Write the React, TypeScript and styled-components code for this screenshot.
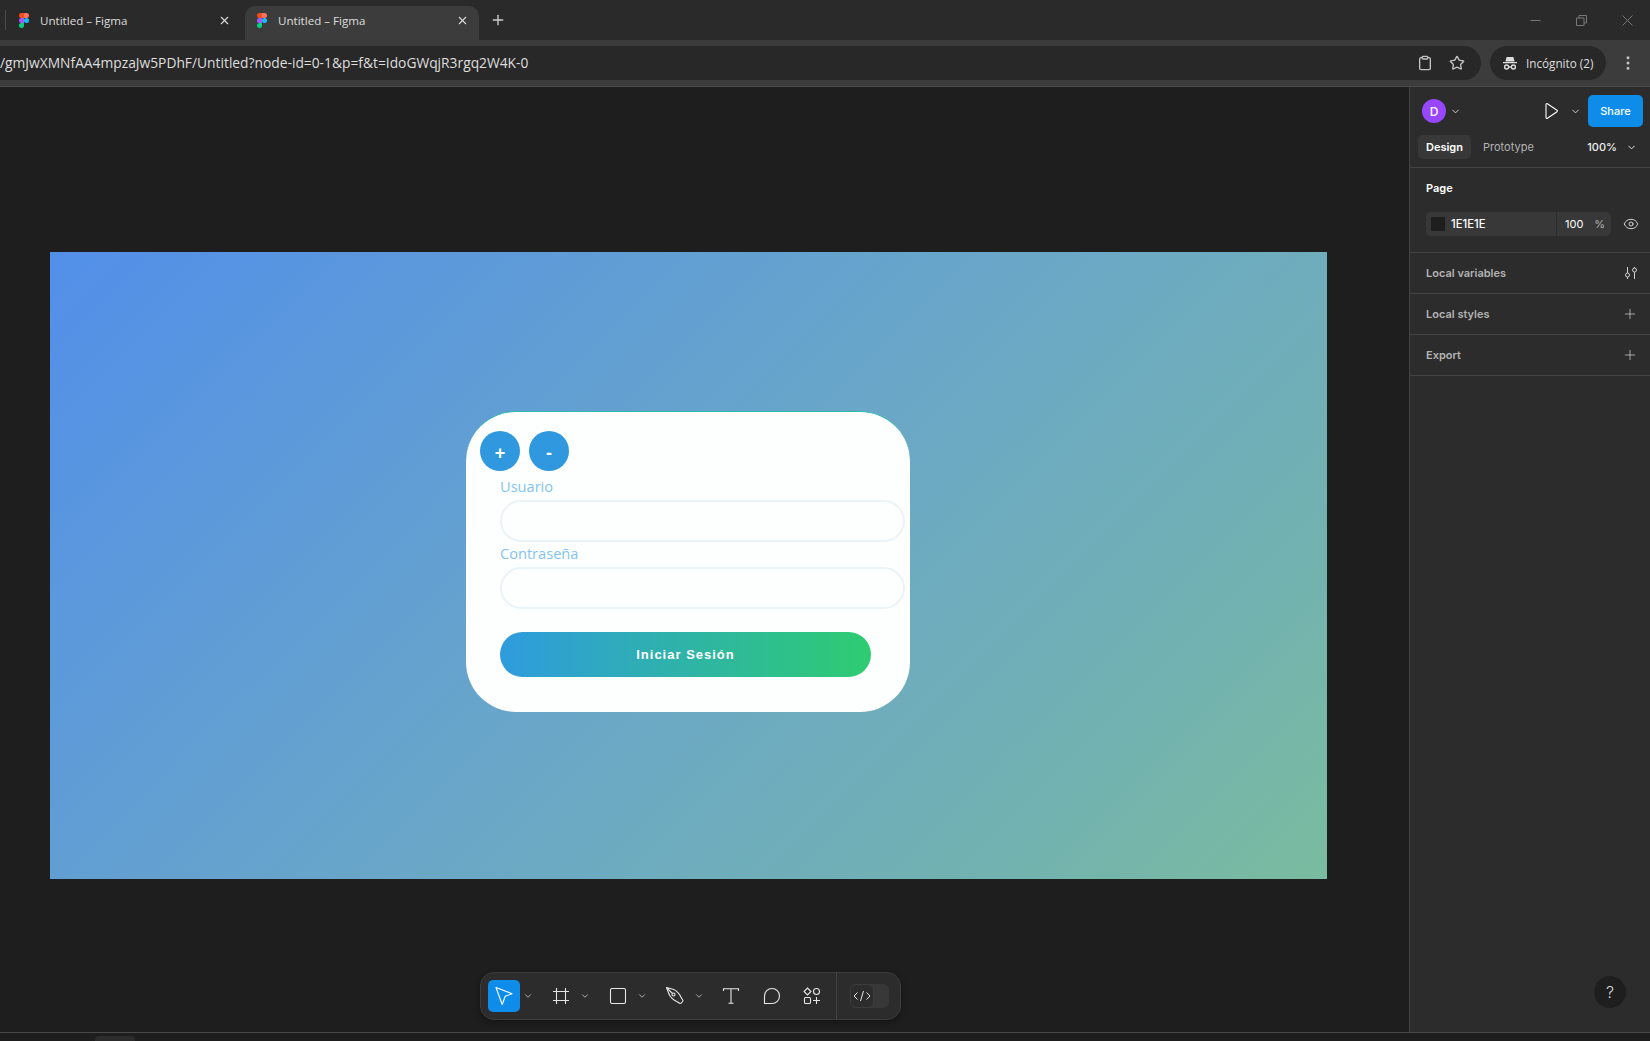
import React from 'react'
import styled, { createGlobalStyle } from 'styled-components'
import { ChevronDown, Clipboard, Eye, EllipsisVertical, Plus, Star, X } from 'lucide-react'

const GlobalStyle = createGlobalStyle`
  html, body { margin: 0; padding: 0; background: #1e1e1e; }
  body { width: 1650px; height: 1041px; overflow: hidden; font-family: Inter, sans-serif; }
  * { box-sizing: border-box; }
`

const Page = styled.div`
  width: 1650px;
  height: 1041px;
  display: flex;
  flex-direction: column;
  overflow: hidden;
`

/* browser chrome */
const TabStrip = styled.div`
  height: 40px;
  display: flex;
  align-items: flex-end;
  padding-left: 5px;
  background: #2a2a2a;
  color: #dcdcdc;
  font-family: 'Open Sans', sans-serif;
  flex-shrink: 0;
`

const TabDivider = styled.div`
  width: 1px;
  height: 20px;
  background: #4a4a4a;
  margin: 0 0 10px 0;
`

const Tab = styled.div<{ $active?: boolean }>`
  width: ${p => (p.$active ? 234 : 233)}px;
  height: 34px;
  margin-left: ${p => (p.$active ? 5 : 1)}px;
  padding: 0 ${p => (p.$active ? 10 : 9)}px 6px 12px;
  display: flex;
  align-items: center;
  gap: 11px;
  border-radius: 10px 10px 0 0;
  background: ${p => (p.$active ? '#3c3c3c' : 'transparent')};
  font-size: 11.6px;
`

const TabTitle = styled.span`
  flex: 1;
  white-space: nowrap;
`

const NewTab = styled.div`
  width: 20px;
  height: 34px;
  margin-left: 9px;
  padding-bottom: 6px;
  display: flex;
  align-items: center;
  justify-content: center;
  color: #d0d0d0;
`

const WindowButtons = styled.div`
  margin-left: auto;
  height: 40px;
  display: flex;
  align-items: center;
  gap: 35px;
  padding-right: 17px;
  color: #777;
`

const Toolbar = styled.div`
  height: 46px;
  padding: 6px 0;
  display: flex;
  align-items: stretch;
  background: #3c3c3c;
  flex-shrink: 0;
`

const Omnibox = styled.div`
  width: 1481px;
  display: flex;
  align-items: center;
  padding-right: 16px;
  background: #282828;
  border-radius: 0 17px 17px 0;
  color: #dedede;
  font-family: 'Open Sans', sans-serif;
  font-size: 13.8px;
  gap: 16px;
`

const Url = styled.div`
  flex: 1;
  white-space: nowrap;
  padding-bottom: 1px;
`

const ProfilePill = styled.div`
  width: 116px;
  margin-left: 9px;
  display: flex;
  align-items: center;
  gap: 8px;
  padding-left: 12px;
  border-radius: 17px;
  background: #282828;
  color: #dedede;
  font-family: 'Open Sans', sans-serif;
  font-size: 11.7px;
  white-space: nowrap;
`

const MenuDots = styled.div`
  width: 44px;
  display: flex;
  align-items: center;
  justify-content: center;
  color: #c4c4c4;
`

/* figma workspace */
const Workspace = styled.div`
  flex: 1;
  min-height: 0;
  display: flex;
  border-top: 1px solid #4a4a4a;
`

const Canvas = styled.div`
  flex: 1;
  padding: 165px 0 0 50px;
  display: flex;
  flex-direction: column;
  align-items: flex-start;
  background: #1e1e1e;
`

const Frame = styled.div`
  width: 1277px;
  height: 627px;
  padding: 159px 0 0 416px;
  background: linear-gradient(135deg, #528fe9 0%, #6ba8c6 54%, #72b2b0 82%, #7abc9f 100%);
`

const LoginCard = styled.div`
  width: 444px;
  height: 301px;
  padding: 19px 5px 0 14px;
  background: #fdfffe;
  border-top: 1px solid #2fb8ac;
  border-radius: 50px;
`

const ZoomButtons = styled.div`
  display: flex;
  gap: 9px;
`

const ZoomButton = styled.button`
  width: 40px;
  height: 40px;
  padding: 5px 0 0;
  border: 0;
  border-radius: 50%;
  background: #3098de;
  color: #fff;
  font-family: 'Liberation Sans', sans-serif;
  font-size: 18px;
  font-weight: 700;
`

const Form = styled.div`
  padding: 4px 0 0 20px;
`

const FieldLabel = styled.label`
  display: block;
  height: 23px;
  margin-bottom: 2px;
  color: #84c4f2;
  font-family: 'Open Sans', sans-serif;
  font-size: 14.6px;
  line-height: 23px;
`

const FieldInput = styled.input`
  display: block;
  width: 405px;
  height: 42px;
  border: 2px solid #ebf3f7;
  border-radius: 21px;
  background: #fdfffe;
  outline: 0;
`

const SubmitButton = styled.button`
  display: block;
  width: 371px;
  height: 45px;
  margin-top: 23px;
  border: 0;
  border-radius: 23px;
  background: linear-gradient(90deg, #2f9bde, #2ecc71);
  color: #fff;
  font-family: 'Liberation Sans', sans-serif;
  font-size: 13px;
  font-weight: 700;
  letter-spacing: 1px;
`

const ToolDock = styled.div`
  width: 421px;
  height: 48px;
  margin: 93px 0 0 430px;
  padding-left: 7px;
  display: flex;
  align-items: center;
  background: #2c2c2c;
  border: 1px solid #3d3d3d;
  border-radius: 14px;
  box-shadow: 0 2px 6px rgba(0, 0, 0, 0.35);
  color: #e6e6e6;
`

const ToolGroup = styled.div<{ $gap?: number }>`
  display: flex;
  align-items: center;
  margin-right: ${p => p.$gap ?? 9}px;
`

const Tool = styled.div<{ $selected?: boolean }>`
  width: 32px;
  height: 32px;
  display: flex;
  align-items: center;
  justify-content: center;
  border-radius: 5px;
  background: ${p => (p.$selected ? '#0d8ce9' : 'transparent')};
`

const Caret = styled.div`
  width: 16px;
  display: flex;
  justify-content: center;
  color: #c8c8c8;
`

const DockDivider = styled.div`
  width: 1px;
  height: 46px;
  background: #444;
`

const DevToggle = styled.div`
  width: 39px;
  height: 24px;
  margin-left: 13px;
  background: #383838;
  border-radius: 6px;
`

const DevKnob = styled.div`
  width: 24px;
  height: 24px;
  display: flex;
  align-items: center;
  justify-content: center;
  background: #2c2c2c;
  border: 1px solid #3d3d3d;
  border-radius: 6px;
`

/* right panel */
const Panel = styled.aside`
  width: 241px;
  display: flex;
  flex-direction: column;
  background: #2c2c2c;
  border-left: 1px solid #444;
  color: #fff;
  font-size: 11px;
  position: relative;
`

const PanelHead = styled.div`
  height: 48px;
  padding: 8px 7px 0 12px;
  display: flex;
  align-items: flex-start;
`

const Avatar = styled.div`
  width: 24px;
  height: 24px;
  margin-top: 4px;
  border-radius: 50%;
  display: flex;
  align-items: center;
  justify-content: center;
  background: #9747ff;
  font-size: 12px;
  font-weight: 500;
`

const HeadCaret = styled.div<{ $left: number }>`
  margin: 11px 0 0 ${p => p.$left}px;
  display: flex;
  color: #ddd;
`

const PlayIcon = styled.div`
  margin: 7px 0 0 auto;
  display: flex;
`

const ShareButton = styled.div`
  width: 55px;
  height: 32px;
  margin-left: 7px;
  display: flex;
  align-items: center;
  justify-content: center;
  border-radius: 5px;
  background: #0d8ce9;
  font-weight: 500;
`

const TabRow = styled.div`
  height: 33px;
  padding: 0 13px 0 8px;
  display: flex;
  align-items: flex-start;
  border-bottom: 1px solid #444;
`

const ModeTab = styled.div<{ $active?: boolean }>`
  height: 24px;
  padding: 0 8px;
  display: flex;
  align-items: center;
  border-radius: 5px;
  background: ${p => (p.$active ? '#383838' : 'transparent')};
  color: ${p => (p.$active ? '#fff' : '#b3b3b3')};
  font-weight: ${p => (p.$active ? 600 : 400)};
  margin-right: 4px;
`

const ZoomValue = styled.div`
  margin-left: auto;
  height: 24px;
  display: flex;
  align-items: center;
  gap: 9px;
  font-weight: 500;
  color: #f0f0f0;
`

const PageSection = styled.section`
  height: 85px;
  padding: 12px 0 0 16px;
  border-bottom: 1px solid #444;
`

const SectionTitle = styled.div`
  height: 17px;
  line-height: 17px;
  font-weight: 600;
`

const ColorRow = styled.div`
  margin-top: 15px;
  display: flex;
  align-items: center;
`

const ColorField = styled.div`
  width: 185px;
  height: 24px;
  flex-shrink: 0;
  display: flex;
  align-items: center;
  padding-left: 5px;
  border-radius: 5px;
  background: #383838;
`

const Swatch = styled.div`
  width: 14px;
  height: 14px;
  margin-right: 6px;
  border-radius: 1px;
  background: #1e1e1e;
`

const HexValue = styled.div`
  width: 105px;
  font-size: 11.3px;
  font-weight: 500;
`

const Opacity = styled.div`
  height: 24px;
  flex: 1;
  display: flex;
  align-items: center;
  justify-content: space-between;
  padding: 0 6px 0 8px;
  border-left: 1px solid #2c2c2c;

  span { color: #b3b3b3; }
`

const EyeSlot = styled.div`
  margin-left: 12px;
  display: flex;
  color: #e6e6e6;
`

const CollapsedRow = styled.div`
  height: 41px;
  padding: 0 12px 0 16px;
  display: flex;
  align-items: center;
  justify-content: space-between;
  border-bottom: 1px solid #444;
  color: #b3b3b3;
  font-weight: 600;
`

const HelpButton = styled.div`
  position: absolute;
  right: 24px;
  top: 889px;
  width: 32px;
  height: 32px;
  display: flex;
  align-items: center;
  justify-content: center;
  border-radius: 50%;
  background: #1e1e1e;
  color: #d8d8d8;
  font-size: 16px;
  font-weight: 300;
`

const BottomBar = styled.div`
  height: 9px;
  padding: 3px 0 0 95px;
  flex-shrink: 0;
  background: #1e1e1e;
  border-top: 1px solid #4a4a4a;
`

const BottomTab = styled.div`
  width: 40px;
  height: 6px;
  background: #2c2c2c;
  border-radius: 4px 4px 0 0;
`

const FigmaLogo = () => (
  <svg width="10" height="15" viewBox="0 0 38 57">
    <path fill="#1abcfe" d="M19 28.5a9.5 9.5 0 1 1 19 0 9.5 9.5 0 0 1-19 0z" />
    <path fill="#0acf83" d="M0 47.5A9.5 9.5 0 0 1 9.5 38H19v9.5a9.5 9.5 0 1 1-19 0z" />
    <path fill="#ff7262" d="M19 0v19h9.5a9.5 9.5 0 1 0 0-19H19z" />
    <path fill="#f24e1e" d="M0 9.5A9.5 9.5 0 0 0 9.5 19H19V0H9.5A9.5 9.5 0 0 0 0 9.5z" />
    <path fill="#a259ff" d="M0 28.5A9.5 9.5 0 0 0 9.5 38H19V19H9.5A9.5 9.5 0 0 0 0 28.5z" />
  </svg>
)

const Incognito = () => (
  <svg width="16" height="16" viewBox="0 0 16 16" fill="none" stroke="#dedede" strokeWidth="1.4">
    <path fill="#dedede" stroke="none" d="M4.6 2h6.8l1.2 4.4H3.4zM1 7h14v1.2H1z" />
    <circle cx="4.6" cy="12" r="2" />
    <circle cx="11.4" cy="12" r="2" />
    <path d="M6.6 12h2.8" />
  </svg>
)

const RestoreIcon = () => (
  <svg width="11" height="11" viewBox="0 0 11 11" fill="none" stroke="currentColor">
    <path d="M.5 3h7.5v7.500H.5z" />
    <path d="M3 3V.5h7.500V8H8" />
  </svg>
)

const CloseIcon = () => (
  <svg width="11" height="11" viewBox="0 0 11 11" fill="none" stroke="currentColor">
    <path d="M.5.5l10 10M10.5.5l-10 10" />
  </svg>
)

const MinimizeIcon = () => (
  <svg width="11" height="11" viewBox="0 0 11 11" fill="none" stroke="currentColor">
    <path d="M.5 5.5h10" />
  </svg>
)

const PlayGlyph = () => (
  <svg width="16" height="18" viewBox="0 0 16 18" fill="none" stroke="#fff" strokeWidth="1.1" strokeLinejoin="round">
    <path d="M3 2.5c0-.8.8-1.2 1.4-.8l9.6 6.6c.5.4.5 1 0 1.4l-9.6 6.6c-.6.4-1.4 0-1.4-.8z" />
  </svg>
)

const SlidersIcon = () => (
  <svg width="14" height="14" viewBox="0 0 14 14" fill="none" stroke="#d0d0d0">
    <path d="M3.5 1v6M3.5 11v2M10.5 1v1M10.5 6v7" />
    <circle cx="3.5" cy="9" r="2" />
    <circle cx="10.5" cy="4" r="2" />
  </svg>
)

const ArrowTool = () => (
  <svg width="20" height="22" viewBox="0 0 20 22" fill="none" stroke="#fff" strokeWidth="1.1" strokeLinejoin="round">
    <path d="M2 2.5l16 6.2-6.8 2.6-3 8.2z" />
  </svg>
)

const FrameTool = () => (
  <svg width="18" height="18" viewBox="0 0 18 18" fill="none" stroke="#e6e6e6" strokeWidth="1.1">
    <path d="M4.5 1v16M13.5 1v16M1 4.5h16M1 13.5h16" />
  </svg>
)

const RectTool = () => (
  <svg width="18" height="18" viewBox="0 0 18 18" fill="none" stroke="#e6e6e6" strokeWidth="1.1">
    <rect x="1.5" y="1.5" width="15" height="15" rx="1.5" />
  </svg>
)

const PenTool = () => (
  <svg width="20" height="20" viewBox="0 0 20 20" fill="none" stroke="#e6e6e6" strokeWidth="1.1" strokeLinejoin="round">
    <path d="M1.5 1.500l6.500 1.800c3.500 1 7 5 8 8l2 3.200c.3.800-2.200 3.300-3 3l-3.200-2c-3-1-7-4.500-8-8z" />
    <circle cx="8.500" cy="8.500" r="1.500" />
    <path d="M2 2l5.500 5.500" />
  </svg>
)

const TextTool = () => (
  <svg width="18" height="18" viewBox="0 0 18 18" fill="none" stroke="#e6e6e6" strokeWidth="1.1">
    <path d="M1.500 4V1.700h15V4M9 1.700v14.600M6.500 16.300h5" />
  </svg>
)

const CommentTool = () => (
  <svg width="18" height="18" viewBox="0 0 18 18" fill="none" stroke="#e6e6e6" strokeWidth="1.1">
    <path d="M1.500 16.500V9a7.500 7.500 0 1 1 7.500 7.500z" />
  </svg>
)

const ComponentsTool = () => (
  <svg width="18" height="18" viewBox="0 0 18 18" fill="none" stroke="#e6e6e6" strokeWidth="1.1">
    <path d="M4.500 1l3.500 3.500L4.500 8 1 4.500z" />
    <circle cx="13.500" cy="4.500" r="3" />
    <rect x="1.500" y="10.500" width="6" height="6" rx="1" />
    <path d="M13.500 10v7M10 13.500h7" />
  </svg>
)

const CodeGlyph = () => (
  <svg width="18" height="12" viewBox="0 0 18 12" fill="none" stroke="#e6e6e6" strokeWidth="1">
    <path d="M4.500 2.500L1 6l3.500 3.500M13.500 2.500L17 6l-3.500 3.500M10.500 1l-3 10" />
  </svg>
)

const tools = [
  { icon: <ArrowTool />, selected: true, caret: true },
  { icon: <FrameTool />, caret: true },
  { icon: <RectTool />, caret: true },
  { icon: <PenTool />, caret: true, gap: 8 },
  { icon: <TextTool /> },
  { icon: <CommentTool />, gap: 8 },
  { icon: <ComponentsTool />, gap: 8 },
]

const App: React.FC = () => (
  <Page>
    <GlobalStyle />
    <TabStrip>
      <TabDivider />
      <Tab>
        <FigmaLogo />
        <TabTitle>Untitled – Figma</TabTitle>
        <X size={13} />
      </Tab>
      <Tab $active>
        <FigmaLogo />
        <TabTitle>Untitled – Figma</TabTitle>
        <X size={13} />
      </Tab>
      <NewTab>
        <Plus size={16} />
      </NewTab>
      <WindowButtons>
        <MinimizeIcon />
        <RestoreIcon />
        <CloseIcon />
      </WindowButtons>
    </TabStrip>
    <Toolbar>
      <Omnibox>
        <Url>/gmJwXMNfAA4mpzaJw5PDhF/Untitled?node-id=0-1&amp;p=f&amp;t=IdoGWqjR3rgq2W4K-0</Url>
        <Clipboard size={16} color="#c4c4c4" />
        <Star size={16} color="#c4c4c4" />
      </Omnibox>
      <ProfilePill>
        <Incognito />
        Incógnito (2)
      </ProfilePill>
      <MenuDots>
        <EllipsisVertical size={18} />
      </MenuDots>
    </Toolbar>
    <Workspace>
      <Canvas>
        <Frame>
          <LoginCard>
            <ZoomButtons>
              <ZoomButton>+</ZoomButton>
              <ZoomButton>-</ZoomButton>
            </ZoomButtons>
            <Form>
              <FieldLabel>Usuario</FieldLabel>
              <FieldInput />
              <FieldLabel>Contraseña</FieldLabel>
              <FieldInput type="password" />
              <SubmitButton>Iniciar Sesión</SubmitButton>
            </Form>
          </LoginCard>
        </Frame>
        <ToolDock>
          {tools.map((tool, i) => (
            <ToolGroup key={i} $gap={tool.gap}>
              <Tool $selected={tool.selected}>{tool.icon}</Tool>
              {tool.caret && (
                <Caret>
                  <ChevronDown size={10} strokeWidth={2} />
                </Caret>
              )}
            </ToolGroup>
          ))}
          <DockDivider />
          <DevToggle>
            <DevKnob>
              <CodeGlyph />
            </DevKnob>
          </DevToggle>
        </ToolDock>
      </Canvas>
      <Panel>
        <PanelHead>
          <Avatar>D</Avatar>
          <HeadCaret $left={4}>
            <ChevronDown size={11} strokeWidth={2} />
          </HeadCaret>
          <PlayIcon>
            <PlayGlyph />
          </PlayIcon>
          <HeadCaret $left={11}>
            <ChevronDown size={11} strokeWidth={2} />
          </HeadCaret>
          <ShareButton>Share</ShareButton>
        </PanelHead>
        <TabRow>
          <ModeTab $active>Design</ModeTab>
          <ModeTab>Prototype</ModeTab>
          <ZoomValue>
            100%
            <ChevronDown size={11} strokeWidth={2} />
          </ZoomValue>
        </TabRow>
        <PageSection>
          <SectionTitle>Page</SectionTitle>
          <ColorRow>
            <ColorField>
              <Swatch />
              <HexValue>1E1E1E</HexValue>
              <Opacity>
                100
                <span>%</span>
              </Opacity>
            </ColorField>
            <EyeSlot>
              <Eye size={16} strokeWidth={1.3} />
            </EyeSlot>
          </ColorRow>
        </PageSection>
        <CollapsedRow>
          Local variables
          <SlidersIcon />
        </CollapsedRow>
        <CollapsedRow>
          Local styles
          <Plus size={16} strokeWidth={1} color="#e0e0e0" />
        </CollapsedRow>
        <CollapsedRow>
          Export
          <Plus size={16} strokeWidth={1} color="#e0e0e0" />
        </CollapsedRow>
        <HelpButton>?</HelpButton>
      </Panel>
    </Workspace>
    <BottomBar>
      <BottomTab />
    </BottomBar>
  </Page>
)

export default App
